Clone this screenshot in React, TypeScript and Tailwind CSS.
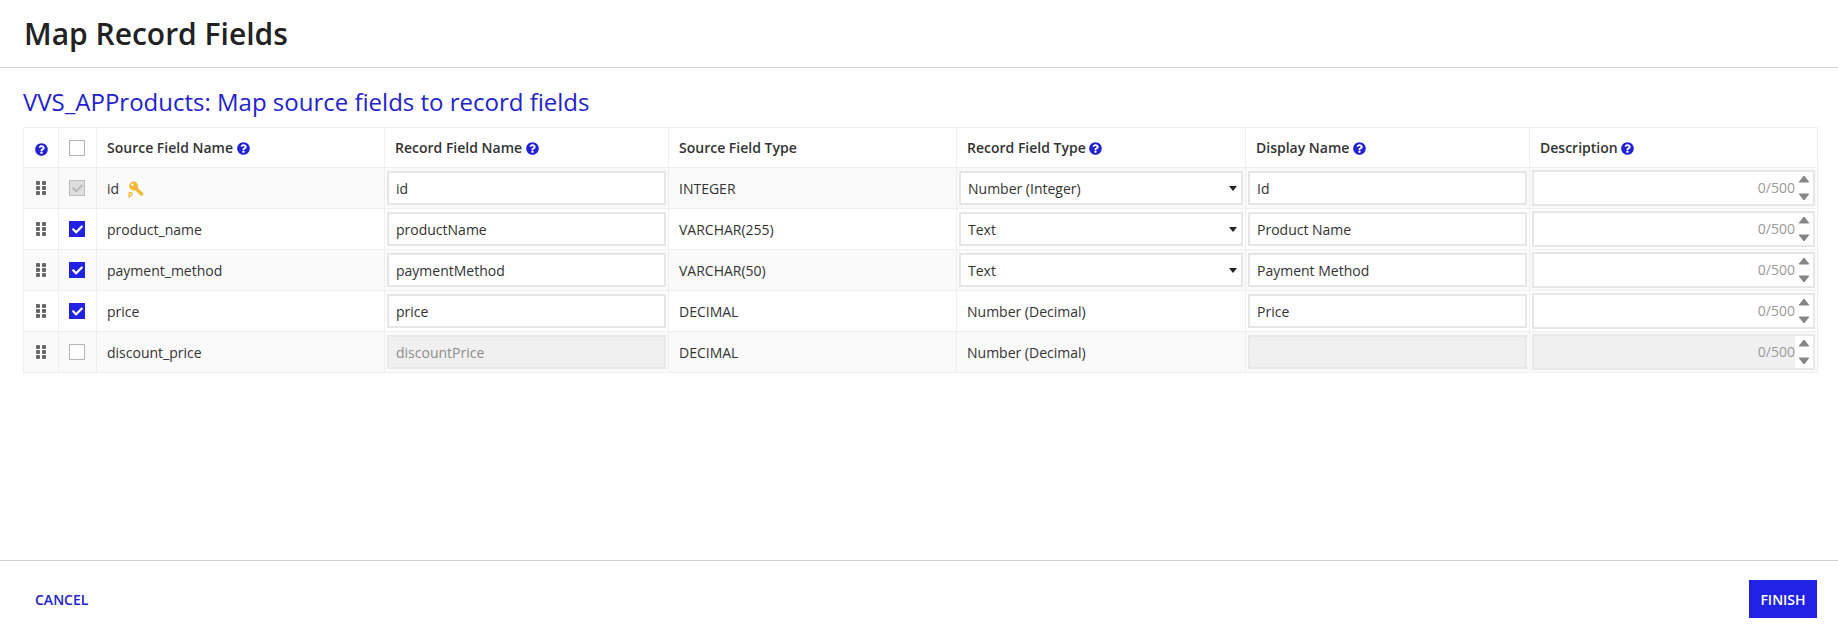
import React from "react";
import { FaQuestionCircle, FaCheck } from "react-icons/fa";

const Help = ({ className = "" }: { className?: string }) => (
  <FaQuestionCircle className={`inline-block text-[#2222d8] w-[13px] h-[13px] ${className}`} />
);

const Grip = () => (
  <svg width="10" height="14" viewBox="0 0 10 14" className="block mx-auto" fill="#666666">
    <rect x="0" y="0" width="4" height="4" rx="1" />
    <rect x="6" y="0" width="4" height="4" rx="1" />
    <rect x="0" y="5" width="4" height="4" rx="1" />
    <rect x="6" y="5" width="4" height="4" rx="1" />
    <rect x="0" y="10" width="4" height="4" rx="1" />
    <rect x="6" y="10" width="4" height="4" rx="1" />
  </svg>
);

const Check = ({ state }: { state: "off" | "on" | "locked" }) => {
  const cls =
    state === "on"
      ? "bg-[#2222e6] border-[#2222e6]"
      : state === "locked"
      ? "bg-[#dedede] border-[#bdbdbd]"
      : "bg-white border-[#b5b5b5]";
  return (
    <div className={`w-4 h-4 border flex items-center justify-center ml-[10px] ${cls}`}>
      {state === "on" && <FaCheck className="w-[11px] h-[11px] text-white" />}
      {state === "locked" && <FaCheck className="w-[11px] h-[11px] text-[#bcbcbc]" />}
    </div>
  );
};

const Key = () => (
  <span className="relative inline-block w-[16px] h-[17px] ml-[9px] align-middle">
    <svg width="16" height="16" viewBox="0 0 16 16" className="absolute left-0 top-0">
      <circle cx="5.6" cy="5" r="4.4" fill="#f2b632" />
      <circle cx="4.4" cy="3.8" r="1.2" fill="#fff" />
      <path d="M7.5 7.2 L13.6 13" stroke="#f2b632" strokeWidth="3.4" strokeLinecap="round" />
    </svg>
    <span className="absolute left-0 top-[9px] text-[8px] leading-[9px] font-bold text-[#f2b632]">P</span>
  </span>
);

const Field = ({ value, disabled }: { value: string; disabled?: boolean }) => (
  <div
    className={`h-[34px] border-2 flex items-center px-[7px] ${
      disabled ? "bg-[#f0f0f0] border-[#e8e8e8] text-[#8c8c8c]" : "bg-white border-[#e6e6e6] text-[#333]"
    }`}
  >
    {value}
  </div>
);

const SelectBox = ({ value }: { value: string }) => (
  <div className="h-[34px] border-2 border-[#e6e6e6] bg-white flex items-center justify-between pl-[7px] pr-[3px] text-[#333]">
    <span>{value}</span>
    <span className="w-0 h-0 border-x-[4.5px] border-x-transparent border-t-[5px] border-t-[#222] mr-[1px]" />
  </div>
);

const Arrow = ({ down }: { down?: boolean }) => (
  <svg width="12" height="8" viewBox="0 0 12 8" className="block">
    <path
      d={down ? "M1.2 1 L10.8 1 L6 7 Z" : "M1.2 7 L10.8 7 L6 1 Z"}
      fill="#858585"
      stroke="#858585"
      strokeWidth="1"
      strokeLinejoin="round"
    />
  </svg>
);

const Desc = ({ disabled }: { disabled?: boolean }) => (
  <div
    className={`h-[36px] border-2 flex items-center justify-end text-[#999] relative pr-[18px] ${
      disabled ? "bg-[#f0f0f0] border-[#e8e8e8]" : "bg-white border-[#e6e6e6]"
    }`}
  >
    <span className="-mt-[2px]">0/500</span>
    <div className="absolute right-0 top-0 bottom-0 w-[18px] flex flex-col justify-between items-center pt-[3px] pb-[3px] bg-white">
      <Arrow />
      <Arrow down />
    </div>
  </div>
);

type Row = {
  source: string;
  name: string;
  srcType: string;
  recType: string;
  select: boolean;
  display: string;
  state: "off" | "on" | "locked";
  keyed?: boolean;
};

const rows: Row[] = [
  { source: "id", name: "id", srcType: "INTEGER", recType: "Number (Integer)", select: true, display: "Id", state: "locked", keyed: true },
  { source: "product_name", name: "productName", srcType: "VARCHAR(255)", recType: "Text", select: true, display: "Product Name", state: "on" },
  { source: "payment_method", name: "paymentMethod", srcType: "VARCHAR(50)", recType: "Text", select: true, display: "Payment Method", state: "on" },
  { source: "price", name: "price", srcType: "DECIMAL", recType: "Number (Decimal)", select: false, display: "Price", state: "on" },
  { source: "discount_price", name: "discountPrice", srcType: "DECIMAL", recType: "Number (Decimal)", select: false, display: "", state: "off" },
];

const th = "border border-[#efefef] pl-[10px] pr-[8px] text-left font-semibold align-middle";
const td = "border border-[#efefef] pl-[10px] pr-[8px] align-middle";
const tdi = "border border-[#efefef] px-[2px] align-middle";

export default function App() {
  return (
    <div
      className="w-[1838px] h-[637px] flex flex-col bg-white text-[14px] text-[#333] overflow-hidden"
      style={{ fontFamily: '"Open Sans", sans-serif' }}
    >
      <header className="h-[68px] shrink-0 border-b border-[#d4d4d4] flex items-center px-6">
        <h1 className="text-[30px] font-semibold text-[#222]">Map Record Fields</h1>
      </header>
      <main className="flex-1 px-[23px] pt-[17px]">
        <h2 className="text-[24px] leading-[34px] text-[#2222d0] mb-[8px]">VVS_APProducts: Map source fields to record fields</h2>
        <table className="table-fixed border-collapse w-[1794px]">
          <colgroup>
            <col className="w-[35px]" />
            <col className="w-[38px]" />
            <col className="w-[288px]" />
            <col className="w-[284px]" />
            <col className="w-[288px]" />
            <col className="w-[289px]" />
            <col className="w-[284px]" />
            <col className="w-[288px]" />
          </colgroup>
          <thead>
            <tr className="h-[40px] bg-white">
              <th className="border border-[#efefef] text-center align-middle"><Help className="mx-auto" /></th>
              <th className="border border-[#efefef] align-middle"><Check state="off" /></th>
              <th className={th}>Source Field Name <Help className="-mt-[2px]" /></th>
              <th className={th}>Record Field Name <Help className="-mt-[2px]" /></th>
              <th className={th}>Source Field Type</th>
              <th className={th}>Record Field Type <Help className="-mt-[2px]" /></th>
              <th className={th}>Display Name <Help className="-mt-[2px]" /></th>
              <th className={th}>Description <Help className="-mt-[2px]" /></th>
            </tr>
          </thead>
          <tbody>
            {rows.map((r, i) => (
              <tr key={r.source} className={`h-[41px] ${i % 2 === 0 ? "bg-[#fafafa]" : "bg-white"}`}>
                <td className="border border-[#efefef] align-middle"><Grip /></td>
                <td className="border border-[#efefef] align-middle"><Check state={r.state} /></td>
                <td className={td}>{r.source}{r.keyed && <Key />}</td>
                <td className={tdi}><Field value={r.name} disabled={r.state === "off"} /></td>
                <td className={td}>{r.srcType}</td>
                <td className={r.select ? tdi : td}>{r.select ? <SelectBox value={r.recType} /> : r.recType}</td>
                <td className={tdi}><Field value={r.display} disabled={r.state === "off"} /></td>
                <td className={tdi}><Desc disabled={r.state === "off"} /></td>
              </tr>
            ))}
          </tbody>
        </table>
      </main>
      <footer className="h-[77px] shrink-0 border-t border-[#d4d4d4] flex items-start justify-between pl-[35px] pr-[21px] pt-[19px]">
        <button className="h-[38px] text-[#2222d0] font-semibold text-[14px]">CANCEL</button>
        <button className="w-[68px] h-[38px] bg-[#2222e6] text-white font-semibold text-[14px]">FINISH</button>
      </footer>
    </div>
  );
}
